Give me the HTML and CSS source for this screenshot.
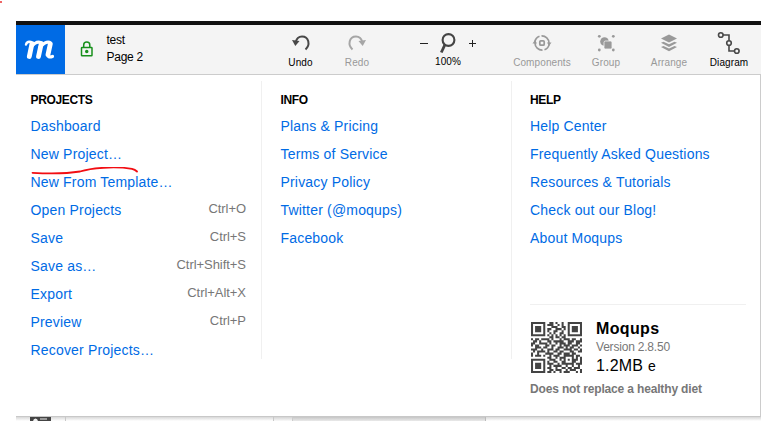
FILE: index.html
```
<!DOCTYPE html>
<html lang="en">
<head>
<meta charset="utf-8">
<title>Moqups</title>
<link rel="stylesheet" href="styles.css">
</head>
<body>
<div class="speck"></div>
<div class="app">
  <header class="toolbar">
    <div class="logo">
      <svg width="49" height="49" viewBox="0 0 49 49" fill="none" stroke="#fff" stroke-linecap="round" stroke-linejoin="round"><path stroke-width="2.400" d="M10 19.500Q11 16 15 17"/><path stroke-width="4.800" d="M16 18.500L13.300 31.500M25.300 18.500L22.500 31.500M34.300 19L32 29.500"/><path stroke-width="3.200" d="M32 29.500Q31.500 33 36.500 31.500M15 22Q21 15 25 18M24 22Q31 15 34.500 18"/></svg>
    </div>
    <div class="lock">
      <svg width="14" height="16" viewBox="0 0 14 16" fill="none" stroke="#18901c" stroke-width="1.500"><rect x="1.500" y="6.500" width="10.500" height="8.300" rx=".6"/><path d="M3.700 6.500V4Q3.700 1 6.750 1Q9.800 1 9.800 4V6.500"/><circle cx="6.750" cy="10.600" r="1" fill="#18901c"/></svg>
    </div>
    <div class="title"><span>test</span><span>Page 2</span></div>
    <div class="tools">
      <div class="tool undo"><svg width="26" height="26" viewBox="0 0 26 26"><path d="M7.500 12.500Q9 6.500 14 6.500C21 6.500 22.500 15 17.500 19.500" fill="none" stroke="#484848" stroke-width="2"/><path d="M4 10L11.500 11L7.300 16Z" fill="#484848"/></svg><span>Undo</span></div>
      <div class="tool redo off"><svg width="26" height="26" viewBox="0 0 26 26"><path d="M18.500 12.500Q17 6.500 12 6.500C5 6.500 3.500 15 8.500 19.500" fill="none" stroke="#a6a6a6" stroke-width="2"/><path d="M22 10L14.500 11L18.700 16Z" fill="#a6a6a6"/></svg><span>Redo</span></div>
      <div class="tool zoom">
        <div class="zoomrow"><i class="minus"></i><svg width="20" height="22" viewBox="0 0 20 22" fill="none" stroke="#444"><circle cx="11.500" cy="8" r="5.900" stroke-width="2.100"/><path d="M8 12.500L4.300 20.500" stroke-width="2.800"/></svg><i class="plus"></i></div>
        <span>100%</span>
      </div>
      <div class="tool components off"><svg width="26" height="26" viewBox="0 0 26 26" fill="none" stroke="#999" stroke-width="1.700"><path d="M5.800 12A7.300 7.300 0 0 1 10.500 6.200M12.500 5.800A7.200 7.200 0 0 1 20 13M20.200 14A7.300 7.300 0 0 1 15.500 19.800M13.500 20.200A7.200 7.200 0 0 1 6 13"/><rect x="10.800" y="10.800" width="4.400" height="4.400" rx="1"/><path d="M3.500 13.500L6 10L8 13.500ZM18 12.500H22.500L20 16Z" fill="#999" stroke="none"/></svg><span>Components</span></div>
      <div class="tool group off"><svg width="26" height="26" viewBox="0 0 26 26" fill="#999"><circle cx="6.300" cy="6.300" r="1.400"/><circle cx="20.300" cy="6.300" r="1.400"/><circle cx="6.300" cy="20" r="1.400"/><circle cx="20.300" cy="20" r="1.400"/><circle cx="11.500" cy="11.500" r="4.300"/><rect x="11" y="11" width="8" height="8" rx="1.500" stroke="#f4f4f4" stroke-width=".8"/></svg><span>Group</span></div>
      <div class="tool arrange off"><svg width="26" height="26" viewBox="0 0 26 26" fill="#999"><path d="M13 4.500L21 8.500L13 12.500L5 8.500Z"/><path d="M5 12.800L7.500 11.800L13 14.300L18.500 11.800L21 12.800L13 17Z"/><path d="M5 17L7.500 16L13 18.500L18.500 16L21 17L13 21.200Z"/></svg><span>Arrange</span></div>
      <div class="tool diagram"><svg width="26" height="26" viewBox="0 0 26 26" fill="none" stroke="#484848" stroke-width="1.600"><path d="M7 5H13V10.500M13 15.500V21H18"/><circle cx="4.800" cy="5" r="2.300"/><circle cx="13" cy="13" r="2.300"/><circle cx="20.800" cy="21" r="2.300"/></svg><span>Diagram</span></div>
    </div>
  </header>

  <main class="menu">
    <section class="column projects">
      <h2>PROJECTS</h2>
      <ul>
        <li><a>Dashboard</a></li>
        <li><a>New Project…</a><svg class="scribble" width="110" height="10" viewBox="0 0 110 10"><path d="M1.500 5.800Q30 7.500 49 4.500C60 1 83-1 101 1.800Q104 2.500 106 4.500" fill="none" stroke="#f20d12" stroke-width="1.800" stroke-linecap="round"/></svg></li>
        <li><a>New From Template…</a></li>
        <li><a>Open Projects</a><kbd>Ctrl+O</kbd></li>
        <li><a>Save</a><kbd>Ctrl+S</kbd></li>
        <li><a>Save as…</a><kbd>Ctrl+Shift+S</kbd></li>
        <li><a>Export</a><kbd>Ctrl+Alt+X</kbd></li>
        <li><a>Preview</a><kbd>Ctrl+P</kbd></li>
        <li><a>Recover Projects…</a></li>
      </ul>
    </section>
    <section class="column info">
      <h2>INFO</h2>
      <ul>
        <li><a>Plans &amp; Pricing</a></li>
        <li><a>Terms of Service</a></li>
        <li><a>Privacy Policy</a></li>
        <li><a>Twitter (@moqups)</a></li>
        <li><a>Facebook</a></li>
      </ul>
    </section>
    <section class="column help">
      <h2>HELP</h2>
      <ul>
        <li><a>Help Center</a></li>
        <li><a>Frequently Asked Questions</a></li>
        <li><a>Resources &amp; Tutorials</a></li>
        <li><a>Check out our Blog!</a></li>
        <li><a>About Moqups</a></li>
      </ul>
      <div class="about">
        <div class="product">
          <svg id="qr" width="51" height="51" viewBox="0 0 25 25"></svg>
          <div class="details">
            <strong>Moqups</strong>
            <span class="version">Version 2.8.50</span>
            <span class="size">1.2MB <small>e</small></span>
          </div>
        </div>
        <p>Does not replace a healthy diet</p>
      </div>
    </section>
  </main>
  <div class="under"><div class="rail"><svg width="21" height="5" viewBox="0 0 21 5"><path fill="#444" d="M0 0H21V5H0Z"/><path d="M3 5Q3 1.500 5.500 1.500Q8 1.500 8 5M10 1.500H17V2.500H10ZM12 4H18V5H12Z" fill="#eee"/></svg></div><div class="search"></div><div class="gap"></div><div class="tab"></div><div class="canvas"></div></div>
</div>
<script src="qr.js"></script>
</body>
</html>
```
FILE: styles.css
```
* { box-sizing: border-box; }
body { margin: 0; height: 421px; overflow: hidden; background: #fff; font-family: "Liberation Sans", Arial, sans-serif; color: #000; }
.speck { width: 2px; height: 2px; margin-top: 1px; background: #e66; }
.app { margin: 18px 0 0 16px; border-top: 4px solid #111; }
.toolbar { display: flex; height: 50px; background: #f4f4f4; border-bottom: 1px solid #ccc; }
.logo { width: 49px; height: 49px; background: #006be5; flex: none; }
.logo svg, .lock svg { display: block; }
.lock { margin: 16px 0 0 15px; width: 14px; flex: none; }
.title { display: flex; flex-direction: column; flex: none; margin: 7px 0 0 12.500px; width: 148px; font-size: 12px; line-height: 17px; letter-spacing: -.25px; }
.tools { display: flex; }
.tool { display: flex; flex-direction: column; align-items: center; padding-top: 5px; font-size: 10px; line-height: 12px; flex: none; }
.tool > svg { display: block; margin-bottom: 1px; }
.tool > span { letter-spacing: .1px; }
.off { color: #999; }
.undo { width: 60px; margin-left: 16px; }
.redo { width: 53px; }
.zoom { width: 74px; margin-left: 27.500px; }
.zoomrow { display: flex; align-items: center; gap: 9px; height: 26px; }
.zoomrow svg { margin-right: 3px; }
.minus, .plus { width: 8px; height: 1px; background: #222; flex: none; }
.plus { height: 7px; width: 7px; background: linear-gradient(#222, #222) center / 7px 1px no-repeat, linear-gradient(#222, #222) center / 1px 7px no-repeat; }
.components { width: 70px; margin-left: 22px; }
.group { width: 58px; }
.arrange { width: 68px; }
.diagram { width: 52px; }
.menu { display: flex; height: 342px; border-right: 1px solid #ccc; border-bottom: 1px solid #c8c8c8; background: #fff; padding-top: 14px; }
.column { display: flex; flex-direction: column; width: 250px; padding-left: 14.500px; }
.projects, .info { height: 278px; margin-top: -8px; padding-top: 8px; }
.projects { width: 246px; padding-right: 15px; border-right: 1px solid #f0f0f0; }
.info { padding-left: 18.500px; border-right: 1px solid #f0f0f0; }
.help { padding-left: 18px; width: 248px; padding-right: 14px; }
h2 { margin: 0 0 3px; font-size: 12px; line-height: 22px; letter-spacing: -.35px; }
ul { list-style: none; margin: 0; padding: 0; }
li { display: flex; justify-content: space-between; height: 28px; line-height: 25px; font-size: 14px; letter-spacing: .18px; position: relative; white-space: nowrap; }
a { color: #006be5; }
kbd { font: 13px/22px "Liberation Sans", Arial, sans-serif; letter-spacing: -.05px; color: #777; }
.scribble { position: absolute; left: 0; top: 25px; }
.about { margin-top: 50px; border-top: 1px solid #f0f0f0; padding-top: 17px; }
.product { display: flex; height: 51px; padding-left: 1px; }
.details { display: flex; flex-direction: column; margin-left: 14px; margin-top: -2px; }
strong { font-size: 16px; line-height: 18px; letter-spacing: .35px; }
.version { font-size: 12px; line-height: 18px; letter-spacing: -.2px; color: #777; }
.size { font-size: 16px; line-height: 19px; letter-spacing: .2px; }
.size small { font-size: 14px; }
.about p { margin: 6px 0 0; font-size: 12px; line-height: 20px; font-weight: bold; letter-spacing: -.16px; color: #777; white-space: nowrap; }
.under { display: flex; height: 5px; background: linear-gradient(#d8d8d8, #fff0 4px), #fff; }
.rail { width: 50px; padding-left: 14px; border-right: 1px solid #c8c8c8; }
.rail svg { display: block; }
.search { width: 208px; border-right: 1px solid #c8c8c8; }
.gap { width: 19px; border-right: 1px solid #ccc; background: #00000005; }
.tab { width: 193px; border-right: 1px solid #bbb; background: #00000015; }
.canvas { flex: 1; }
```
FILE: qr.js
```
const rows = [
  "1111111001101001001111111",
  "1000001011100101001000001",
  "1011101000111001101011101",
  "1011101011001110101011101",
  "1011101010011001001011101",
  "1000001001010011001000001",
  "1111111010101010101111111",
  "0000000001101101100000000",
  "1011011110100010111011001",
  "0110100011011111001110111",
  "1100111101001011101100110",
  "1011000110110010111011101",
  "0011101100100111010110010",
  "1110010011101100111101101",
  "0101111010011011000110011",
  "1001000111100110111011000",
  "1011101001011100111110110",
  "0000000011001011100010101",
  "1111111001110010101011101",
  "1000001010011001100011001",
  "1011101011100101111110111",
  "1011101001011110010010010",
  "1011101011001001101101110",
  "1000001001101110010111001",
  "1111111011010010111000101"
];
let path = "";
rows.forEach((row, y) => [...row].forEach((cell, x) => {
  if (cell === "1") path += `M${x} ${y}h1v1h-1z`;
}));
document.getElementById("qr").innerHTML = `<path fill="#444" d="${path}"/>`;
```
